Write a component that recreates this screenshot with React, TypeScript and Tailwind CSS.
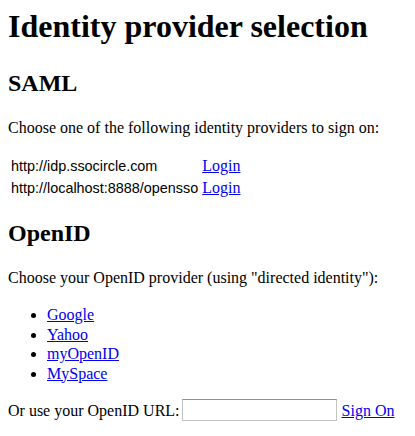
import React from 'react';

const providers = [
  { url: 'http://idp.ssocircle.com' },
  { url: 'http://localhost:8888/opensso' },
];

const openIds = ['Google', 'Yahoo', 'myOpenID', 'MySpace'];

export default function App() {
  return (
    <div className="min-h-screen bg-white p-2 pt-0 font-['Liberation_Serif',serif] text-base text-black">
      {/* Title */}
      <h1 className="mt-[8px] text-[32px] font-bold leading-[37px]">Identity provider selection</h1>

      {/* SAML */}
      <h2 className="mt-[24px] text-[24px] font-bold leading-[28px]">SAML</h2>
      <p className="mt-[21px] leading-[19px]">Choose one of the following identity providers to sign on:</p>
      <table className="mt-[17px] border-separate border-spacing-[2px]">
        <tbody>
          {providers.map((p) => (
            <tr key={p.url}>
              <td className="p-[1px] font-['Liberation_Sans',sans-serif] text-[14.4px] leading-[18px]">{p.url}</td>
              <td className="p-[1px] leading-[18px]">
                <a href="#" className="text-[#0000ee] underline">Login</a>
              </td>
            </tr>
          ))}
        </tbody>
      </table>

      {/* OpenID */}
      <h2 className="mt-[19px] text-[24px] font-bold leading-[28px]">OpenID</h2>
      <p className="mt-[21px] leading-[19px]">Choose your OpenID provider (using "directed identity"):</p>
      <ul className="mt-[18px] list-disc pl-[39px] leading-[19.5px]">
        {openIds.map((name) => (
          <li key={name}>
            <a href="#" className="text-[#0000ee] underline">{name}</a>
          </li>
        ))}
      </ul>
      <p className="mt-[16px] flex items-center leading-[19px]">
        <span>Or use your OpenID URL:</span>
        <input
          type="text"
          className="ml-[2px] h-[22px] w-[155px] border border-[#c3c3c3] border-t-[#8e8e8e] bg-white px-1 outline-none"
        />
        <a href="#" className="ml-[5px] text-[#0000ee] underline">Sign On</a>
      </p>
    </div>
  );
}
